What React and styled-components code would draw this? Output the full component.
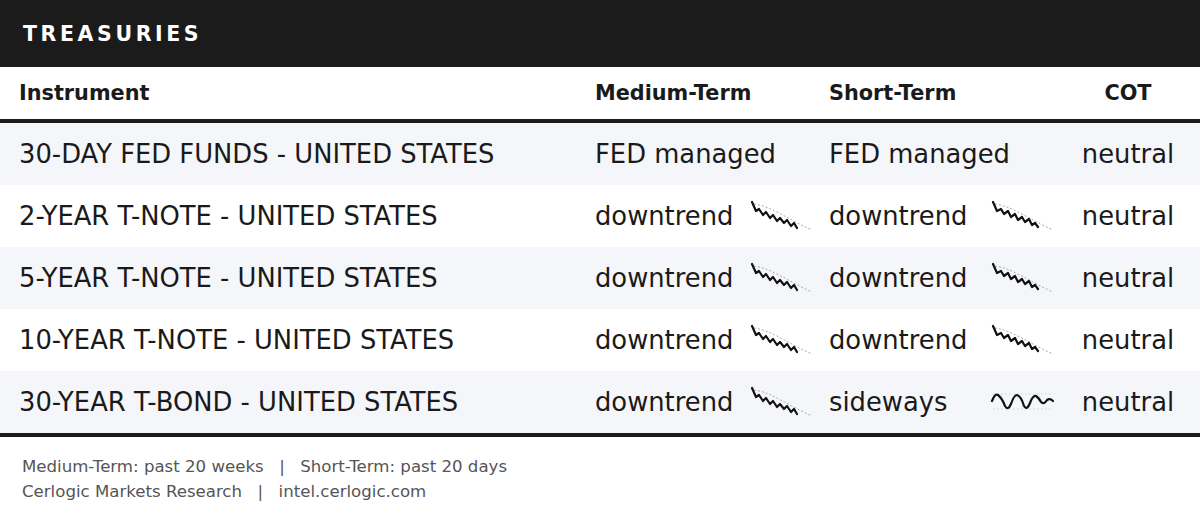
import React from 'react';
import styled, { createGlobalStyle } from 'styled-components';

const GlobalStyle = createGlobalStyle`
  html, body {
    margin: 0;
    padding: 0;
    background: #ffffff;
  }
  body {
    font-family: "DejaVu Sans", "Liberation Sans", sans-serif;
    color: #1a1a1a;
  }
`;

const Page = styled.div`
  width: 1200px;
  background: #ffffff;
`;

const TitleBar = styled.div`
  height: 67px;
  background: #1b1b1b;
  display: flex;
  align-items: center;
  padding-left: 23px;
  box-sizing: border-box;
`;

const Title = styled.h1`
  margin: 0;
  color: #ffffff;
  font-size: 20.5px;
  font-weight: 700;
  letter-spacing: 3.6px;
`;

const Row = styled.div`
  display: grid;
  grid-template-columns: 595px 234px 241px 130px;
  align-items: center;
  height: ${p => (p.$head ? '52px' : '62px')};
  background: ${p => (p.$alt ? '#f5f6fa' : '#ffffff')};
  border-bottom: ${p => (p.$head ? '4px solid #1b1b1b' : 'none')};
`;

const Table = styled.div`
  border-bottom: 4px solid #1b1b1b;
`;

const HeadCell = styled.div`
  font-size: 20.8px;
  font-weight: 700;
  padding-left: ${p => (p.$first ? '19px' : '0')};
  padding-right: ${p => (p.$center ? '14px' : '0')};
  text-align: ${p => (p.$center ? 'center' : 'left')};
`;

const Cell = styled.div`
  font-size: 25.8px;
  padding-left: ${p => (p.$first ? '19px' : '0')};
  white-space: nowrap;
`;

const TrendCell = styled.div`
  display: flex;
  align-items: center;
  justify-content: space-between;
  font-size: 25.8px;
  padding-right: ${p => p.$pad}px;
  white-space: nowrap;
`;

const CotCell = styled.div`
  font-size: 25.8px;
  text-align: center;
  padding-right: 14px;
`;

const Spark = styled.svg`
  width: 64px;
  height: 32px;
  flex: none;
`;

const Footer = styled.div`
  padding: 17px 22px 0;
  font-size: 16.6px;
  line-height: 25px;
  color: #555555;
`;

const Sep = styled.span`
  margin: 0 15.5px;
`;

const down = '3,2 7,11 10,9 14,15 17,12 21,18 24,15 28,21 31,18 35,23 38,20 42,26 45,23 48,28';
const downB = '3,2 7,11 11,9 14,14 18,11 21,17 25,14 28,20 32,17 35,22 39,19 42,25 45,23 48,27';

const Sparkline = ({ kind, alt }) => {
  if (kind === 'sideways') {
    return (
      <Spark viewBox="0 0 64 32">
        <line x1="3" y1="8" x2="62" y2="8" stroke="#cfcfcf" strokeWidth="1" strokeDasharray="1.5 2.5" />
        <line x1="3" y1="23" x2="62" y2="23" stroke="#cfcfcf" strokeWidth="1" strokeDasharray="1.5 2.5" />
        <path
          d="M2 15 Q5 7 8 9 Q12 12 15 20 Q18 25 21 18 Q24 9 27 9 Q31 10 34 20 Q37 25 40 17 Q43 9 46 10 Q49 12 51 16 Q54 19 57 14 Q60 12 63 15"
          fill="none"
          stroke="#111"
          strokeWidth="2.2"
          strokeLinejoin="round"
          strokeLinecap="round"
        />
      </Spark>
    );
  }
  return (
    <Spark viewBox="0 0 64 32">
      <path d="M5 4 C22 6 40 20 63 30" fill="none" stroke="#a8a8a8" strokeWidth="1" strokeDasharray="2 2" />
      <polyline
        points={alt ? downB : down}
        fill="none"
        stroke="#111"
        strokeWidth="2.2"
        strokeLinejoin="round"
        strokeLinecap="round"
      />
    </Spark>
  );
};

const rows = [
  { name: '30-DAY FED FUNDS - UNITED STATES', mid: 'FED managed', short: 'FED managed', cot: 'neutral' },
  { name: '2-YEAR T-NOTE - UNITED STATES', mid: 'downtrend', short: 'downtrend', cot: 'neutral', midSpark: 'down', shortSpark: 'down' },
  { name: '5-YEAR T-NOTE - UNITED STATES', mid: 'downtrend', short: 'downtrend', cot: 'neutral', midSpark: 'down', shortSpark: 'down' },
  { name: '10-YEAR T-NOTE - UNITED STATES', mid: 'downtrend', short: 'downtrend', cot: 'neutral', midSpark: 'down', shortSpark: 'down' },
  { name: '30-YEAR T-BOND - UNITED STATES', mid: 'downtrend', short: 'sideways', cot: 'neutral', midSpark: 'down', shortSpark: 'sideways' },
];

const App = () => (
  <Page>
    <GlobalStyle />
    <TitleBar>
      <Title>TREASURIES</Title>
    </TitleBar>
    <Row $head>
      <HeadCell $first>Instrument</HeadCell>
      <HeadCell>Medium-Term</HeadCell>
      <HeadCell>Short-Term</HeadCell>
      <HeadCell $center>COT</HeadCell>
    </Row>
    <Table>
      {rows.map((r, i) => (
        <Row key={r.name} $alt={i % 2 === 0}>
          <Cell $first>{r.name}</Cell>
          <TrendCell $pad={16}>
            <span>{r.mid}</span>
            {r.midSpark && <Sparkline kind={r.midSpark} />}
          </TrendCell>
          <TrendCell $pad={16}>
            <span>{r.short}</span>
            {r.shortSpark && <Sparkline kind={r.shortSpark} alt />}
          </TrendCell>
          <CotCell>{r.cot}</CotCell>
        </Row>
      ))}
    </Table>
    <Footer>
      <div>
        Medium-Term: past 20 weeks<Sep>|</Sep>Short-Term: past 20 days
      </div>
      <div>
        Cerlogic Markets Research<Sep>|</Sep>intel.cerlogic.com
      </div>
    </Footer>
  </Page>
);

export default App;
